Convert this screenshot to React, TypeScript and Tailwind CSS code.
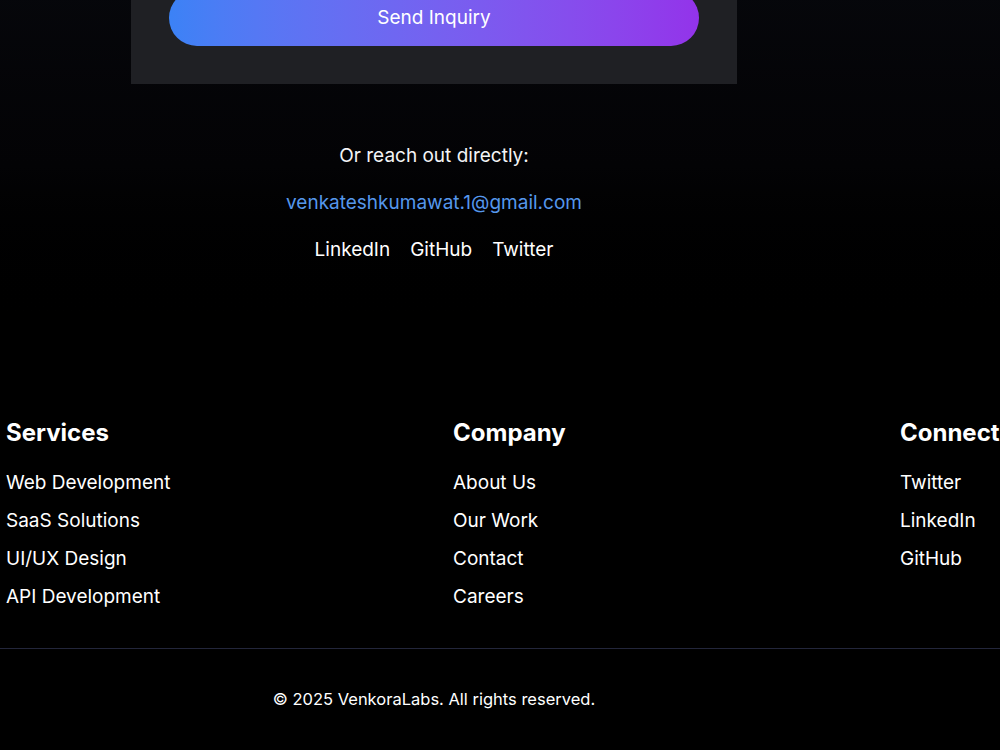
const services = ["Web Development", "SaaS Solutions", "UI/UX Design", "API Development"];
const company = ["About Us", "Our Work", "Contact", "Careers"];
const connect = ["Twitter", "LinkedIn", "GitHub"];

const FooterColumn = ({ title, items }: { title: string; items: string[] }) => (
  <div>
    <h3 className="mb-5 text-2xl font-bold text-white">{title}</h3>
    <ul className="flex flex-col gap-[10px]">
      {items.map((item) => (
        <li key={item}>
          <a href="#" className="text-[19px] leading-7 text-white hover:text-blue-400">
            {item}
          </a>
        </li>
      ))}
    </ul>
  </div>
);

export default function App() {
  return (
    <div className="min-h-[750px] w-full overflow-hidden bg-black font-['Inter','Liberation_Sans',sans-serif]">
      {/* contact section */}
      <section className="h-[352px] w-full bg-gradient-to-b from-[#06070b] via-[#030305] to-black">
        <div className="w-[868px]">
          <div className="mx-auto w-[606px] bg-[#1f2024] px-[38px] pb-[38px]">
            <button className="-mt-[10px] flex h-14 w-full items-center justify-center rounded-full bg-gradient-to-r from-[#3b82f6] to-[#9333ea] text-[19px] text-white">
              Send Inquiry
            </button>
          </div>
          <div className="mt-[58px] flex flex-col items-center">
            <p className="text-[19px] leading-7 text-gray-100">Or reach out directly:</p>
            <a href="#" className="mt-[19px] text-[19px] leading-7 text-[#5597ec]">
              venkateshkumawat.1@gmail.com
            </a>
            <div className="mt-[19px] flex gap-5 text-[19px] leading-7 text-white">
              <a href="#">LinkedIn</a>
              <a href="#">GitHub</a>
              <a href="#">Twitter</a>
            </div>
          </div>
        </div>
      </section>

      {/* footer */}
      <footer className="pt-[75px]">
        <div className="grid w-[1400px] grid-cols-[447px_447px_447px] pb-[37px] pl-[6px]">
          <FooterColumn title="Services" items={services} />
          <FooterColumn title="Company" items={company} />
          <FooterColumn title="Connect" items={connect} />
        </div>
        <div className="border-t border-[#23263b]">
          <p className="w-[868px] pt-[38px] pb-[39px] text-center text-[16.5px] leading-6 text-white">
            © 2025 VenkoraLabs. All rights reserved.
          </p>
        </div>
      </footer>
    </div>
  );
}
